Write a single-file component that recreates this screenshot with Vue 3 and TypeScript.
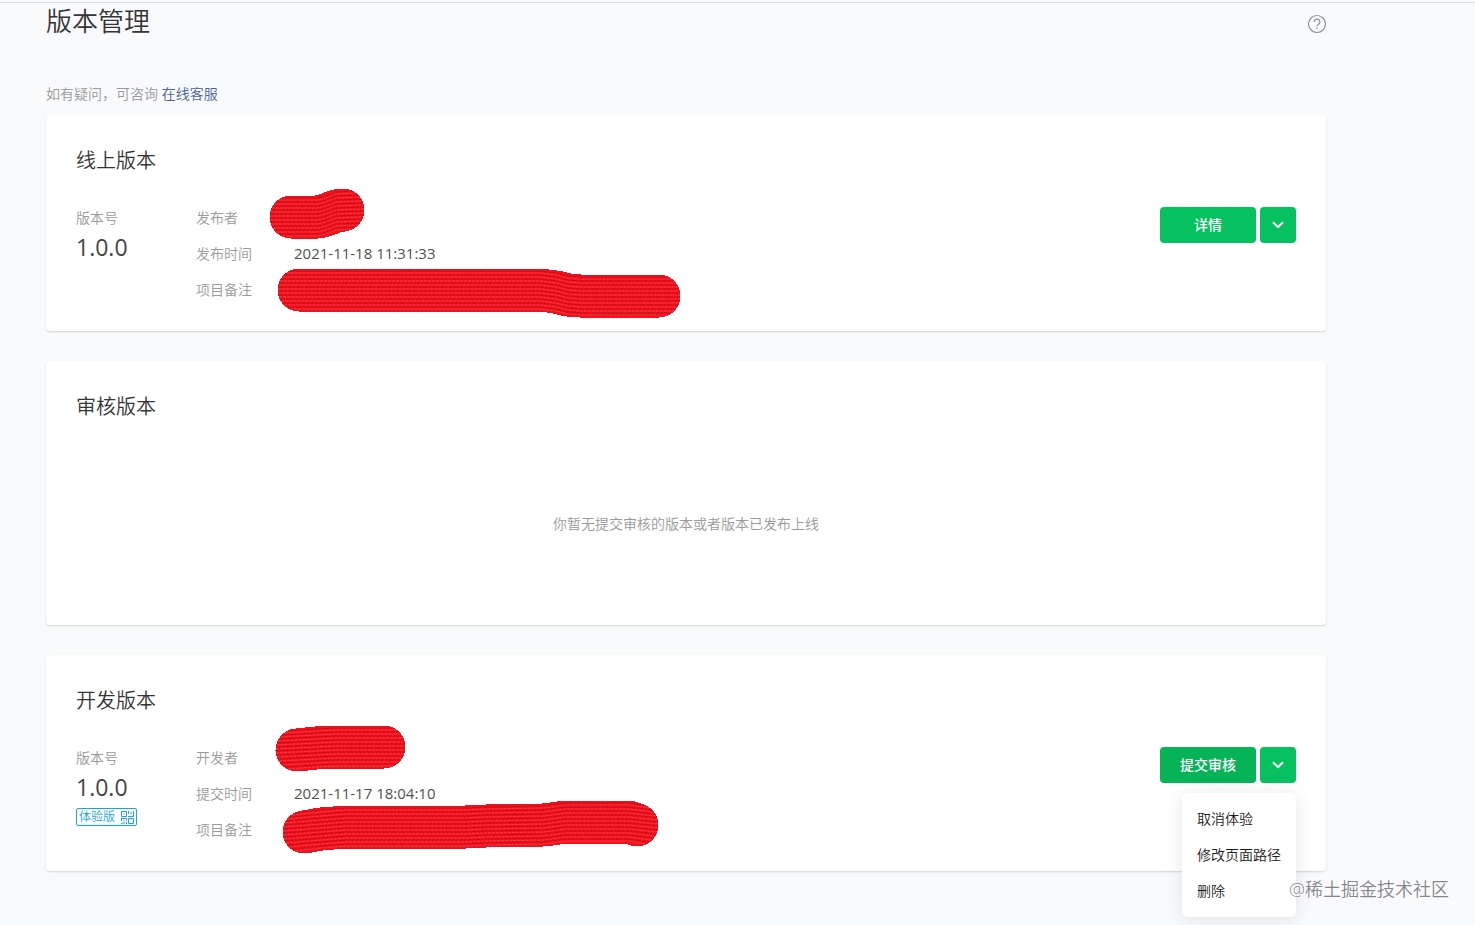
<script setup lang="ts">
import { ref } from 'vue'

type Point = [number, number]

interface Field {
  label: string
  value: string
}

interface Stroke {
  outline: string
  grooves: string[]
}

const BRUSH = 43

const toPath = (points: Point[]): string =>
  'M' + points.map(([x, y]) => `${x} ${y}`).join(' L')

// A marker stroke: one thick line with fine bristle lines running along it.
function marker(points: Point[]): Stroke {
  const grooves: string[] = []
  for (let dy = -19; dy <= 19; dy += 2) {
    const reach = Math.sqrt(21 * 21 - dy * dy)
    const line = points.map(([x, y]): Point => [x, y + dy])
    line[0] = [line[0][0] - reach, line[0][1]]
    const last = line.length - 1
    line[last] = [line[last][0] + reach, line[last][1]]
    grooves.push(toPath(line))
  }
  return { outline: toPath(points), grooves }
}

const onlineFields: Field[] = [
  { label: '发布者', value: '' },
  { label: '发布时间', value: '2021-11-18 11:31:33' },
  { label: '项目备注', value: '' },
]

const devFields: Field[] = [
  { label: '开发者', value: '' },
  { label: '提交时间', value: '2021-11-17 18:04:10' },
  { label: '项目备注', value: '' },
]

const onlineMarks: Stroke[] = [
  marker([[245, 102], [272, 102], [280, 100], [290, 96], [297, 95]]),
  marker([[253, 175], [494, 175], [510, 177], [522, 180], [534, 181], [613, 181]]),
]

const devMarks: Stroke[] = [
  marker([[251, 95], [270, 93], [290, 92], [338, 92]]),
  marker([[258, 177], [275, 174], [300, 172], [420, 172], [440, 171], [498, 170], [520, 167], [583, 167], [591, 170]]),
]

const menuItems = ['取消体验', '修改页面路径', '删除']
const menuOpen = ref(true)
</script>

<template>
  <main class="page">
    <header class="head">
      <h1>版本管理</h1>
      <button class="help" type="button" aria-label="帮助">
        <svg viewBox="0 0 20 20" width="20" height="20" fill="none" stroke="#8e9092" stroke-width="1.2">
          <circle cx="10" cy="10" r="8.5" />
          <path d="M7.2 8a2.8 2.8 0 1 1 4.2 2.3c-1 .6-1.4 1.1-1.4 2.2" />
          <path d="M10 13.6v1.4" />
        </svg>
      </button>
    </header>

    <p class="hint">如有疑问，可咨询 <a href="#">在线客服</a></p>

    <div class="cards">
      <section class="card">
        <h2>线上版本</h2>
        <div class="row">
          <div class="version">
            <span class="label">版本号</span>
            <strong>1.0.0</strong>
          </div>
          <dl class="fields">
            <div v-for="f in onlineFields" :key="f.label" class="field">
              <dt>{{ f.label }}</dt>
              <dd>{{ f.value }}</dd>
            </div>
          </dl>
          <div class="actions">
            <button class="btn" type="button">详情</button>
            <button class="btn arrow" type="button" aria-label="更多">
              <svg viewBox="0 0 12 8" width="12" height="8" fill="none" stroke="#fff" stroke-width="2"><path d="M1 1.2 6 6.2 11 1.2" /></svg>
            </button>
          </div>
        </div>
        <svg class="marks" aria-hidden="true" width="660" height="216">
          <g v-for="(m, i) in onlineMarks" :key="i">
            <path class="ink" :d="m.outline" :stroke-width="BRUSH" />
            <path v-for="(g, j) in m.grooves" :key="j" :class="j % 2 ? 'light' : 'groove'" :d="g" />
          </g>
        </svg>
      </section>

      <section class="card review">
        <h2>审核版本</h2>
        <p class="empty">你暂无提交审核的版本或者版本已发布上线</p>
      </section>

      <section class="card">
        <h2>开发版本</h2>
        <div class="row">
          <div class="version">
            <span class="label">版本号</span>
            <strong>1.0.0</strong>
            <button class="tag" type="button">
              体验版
              <svg viewBox="0 0 13 13" width="13" height="13" fill="none" stroke="#1ba4e4" stroke-width="1">
                <path d="M.5.5h5v5h-5zM7.5 7.5h5v5h-5zM2.5 3h1M7.5 0v3M7 5.5h5.5V0M10 1v2.5M0 7.5h5.5v2M.5 7v3M3 9.5V13M0 12.5h1.5M5.5 11v2" />
              </svg>
            </button>
          </div>
          <dl class="fields">
            <div v-for="f in devFields" :key="f.label" class="field">
              <dt>{{ f.label }}</dt>
              <dd>{{ f.value }}</dd>
            </div>
          </dl>
          <div class="actions">
            <button class="btn pressed" type="button">提交审核</button>
            <button class="btn arrow" type="button" aria-label="更多" :aria-expanded="menuOpen" @click="menuOpen = !menuOpen">
              <svg viewBox="0 0 12 8" width="12" height="8" fill="none" stroke="#fff" stroke-width="2"><path d="M1 1.2 6 6.2 11 1.2" /></svg>
            </button>
            <ul v-if="menuOpen" class="menu">
              <li v-for="item in menuItems" :key="item"><button type="button">{{ item }}</button></li>
            </ul>
          </div>
        </div>
        <svg class="marks" aria-hidden="true" width="660" height="216">
          <g v-for="(m, i) in devMarks" :key="i">
            <path class="ink" :d="m.outline" :stroke-width="BRUSH" />
            <path v-for="(g, j) in m.grooves" :key="j" :class="j % 2 ? 'light' : 'groove'" :d="g" />
          </g>
        </svg>
      </section>
    </div>

    <span class="watermark">@稀土掘金技术社区</span>
  </main>
</template>

<style>
body {
  background: #f8fafc;
}
</style>

<style scoped>
.page {
  position: relative;
  box-sizing: border-box;
  min-height: 100vh;
  padding: 2px 149px 0 46px;
  font-family: "Open Sans", "Noto Sans CJK SC", sans-serif;
  font-size: 14px;
  font-weight: 350;
  color: #353535;
}
.page::before {
  content: "";
  position: absolute;
  top: 2px;
  left: 0;
  right: 0;
  height: 1px;
  background: #dddfe2;
}
h1,
h2,
p,
dl,
dd,
ul {
  margin: 0;
  padding: 0;
}
button {
  margin: 0;
  padding: 0;
  border: 0;
  background: none;
  font: inherit;
  color: inherit;
  cursor: pointer;
}
svg {
  display: block;
}
.head {
  display: flex;
  justify-content: space-between;
  align-items: flex-start;
  height: 40px;
}
h1 {
  font-size: 26px;
  line-height: 38px;
  font-weight: 350;
}
.help {
  margin: 12px -1px 0 0;
}
.hint {
  margin-top: 42px;
  line-height: 20px;
  color: #9a9a9a;
}
.hint a {
  color: #4c629a;
  text-decoration: none;
}
.cards {
  display: grid;
  gap: 30px;
  margin-top: 11px;
}
.card {
  position: relative;
  padding: 31px 30px 23px;
  background: #fff;
  border-radius: 4px;
  box-shadow: 0 1px 2px rgba(0, 0, 0, 0.15);
}
h2 {
  font-size: 20px;
  line-height: 30px;
  font-weight: 350;
}
.row {
  display: flex;
  align-items: flex-start;
  margin-top: 24px;
}
.version {
  display: flex;
  flex-direction: column;
  align-items: flex-start;
  width: 120px;
}
.label,
dt {
  line-height: 36px;
  color: #9a9a9a;
}
.version strong {
  margin-bottom: 2px;
  font-size: 23px;
  line-height: 22px;
  font-weight: 400;
  color: #454545;
}
.tag {
  display: flex;
  align-items: center;
  gap: 6px;
  box-sizing: border-box;
  height: 18px;
  margin-top: 8px;
  padding: 0 2px;
  border: 1px solid #1ba4e4;
  border-radius: 2px;
  font-size: 12px;
  line-height: 16px;
  color: #1ba4e4;
}
.fields {
  flex: 1;
}
.field {
  display: flex;
  height: 36px;
}
dt {
  width: 98px;
}
dd {
  font-size: 15px;
  line-height: 34px;
  font-weight: 400;
  color: #505050;
}
.actions {
  position: relative;
  display: flex;
  gap: 4px;
  margin-top: 7px;
}
.btn {
  width: 96px;
  height: 36px;
  padding-bottom: 2px;
  border-radius: 4px;
  background: #07c160;
  color: #fff;
  font-weight: 500;
}
.btn.pressed {
  background: #06b457;
}
.btn.arrow {
  display: flex;
  justify-content: center;
  align-items: center;
  width: 36px;
  padding: 0;
}
.menu {
  position: absolute;
  z-index: 2;
  top: 46px;
  right: 0;
  padding: 8px 0;
  border-radius: 6px;
  background: #fff;
  box-shadow: 0 2px 18px rgba(0, 0, 0, 0.1);
  list-style: none;
}
.menu button {
  display: block;
  width: 100%;
  padding: 0 15px;
  line-height: 36px;
  text-align: left;
  white-space: nowrap;
  color: #1c1c1c;
}
.review {
  padding-bottom: 2px;
}
.empty {
  display: flex;
  justify-content: center;
  align-items: center;
  height: 201px;
  color: #9a9a9a;
}
.marks {
  position: absolute;
  top: 0;
  left: 0;
  fill: none;
  pointer-events: none;
}
.ink {
  stroke: #ec1420;
  stroke-linecap: round;
  stroke-linejoin: round;
  shape-rendering: crispEdges;
}
.groove {
  stroke: #bc0008;
  stroke-width: 1;
  stroke-dasharray: 5 1 2 1;
  opacity: 0.6;
}
.light {
  stroke: #ff3a46;
  stroke-width: 1;
  stroke-dasharray: 3 1;
  opacity: 0.9;
}
.watermark {
  position: absolute;
  z-index: 3;
  right: 26px;
  bottom: 23px;
  font-size: 18px;
  line-height: 26px;
  color: #85878a;
  text-shadow: 1px 1px 1px #fff;
}
</style>
